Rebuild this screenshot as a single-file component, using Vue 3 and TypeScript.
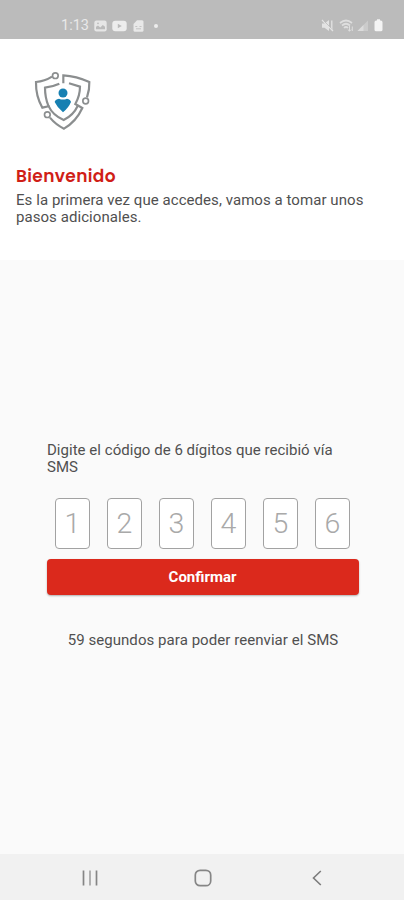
<script setup lang="ts">
import { ref } from 'vue'

const digits = ref<string[]>(['', '', '', '', '', ''])
const seconds = ref<number>(59)
</script>

<template>
  <div class="screen">
    <div class="status">
      <div class="status-left">
        <span class="time">1:13</span>
        <svg class="ic-image" width="13" height="12" viewBox="0 0 13 12">
          <rect x="0.3" y="0.5" width="12.4" height="11" rx="2.2" fill="#e6e6e6" />
          <path d="M2 9.3V6.8L4 5.5l2.3 2L8.8 5 11 6.8v2.5z" fill="#bbb" />
          <circle cx="4" cy="3.3" r="0.9" fill="#bbb" />
        </svg>
        <svg class="ic-video" width="15" height="12" viewBox="0 0 15 12">
          <rect x="0.3" y="0.8" width="14.4" height="10.4" rx="3" fill="#ededed" />
          <path d="M5.8 3.7v4.6L9.8 6z" fill="#bbb" />
        </svg>
        <svg class="ic-card" width="11" height="12" viewBox="0 0 11 12">
          <path d="M4 .3h5q1.500 0 1.500 1.500v8.400q0 1.500-1.500 1.500H2Q.5 11.700.5 10.200V4z" fill="#e8e8e8" />
          <path d="M2.300 6.500h2M6.500 6.500h2M3 8.800h5" stroke="#c4c4c4" stroke-width="1" />
        </svg>
        <i class="dot"></i>
      </div>
      <div class="status-right">
        <svg width="13" height="13" viewBox="0 0 13 13">
          <path d="M1 4.500h2.500L8 1v11L3.500 8.800H1z" fill="#e3e3e3" />
          <path d="M1 1l11 11M10.800 1.500v10" stroke="#e3e3e3" stroke-width="1.300" fill="none" />
          <path d="M2.500 1.500l8 8" stroke="#bbb" stroke-width="0.800" />
        </svg>
        <svg class="ic-wifi" width="15" height="13" viewBox="0 0 15 13">
          <path d="M1 4q6-5 12 0M3 6.500q4-3.500 8 0M5 9q2-2 4 0" stroke="#dedede" stroke-width="1.700" fill="none" />
          <path d="M10.500 7v5M8.800 10.500l1.700 1.700 1.700-1.700M13.300 12V7.500" stroke="#dedede" stroke-width="1" fill="none" />
        </svg>
        <svg class="ic-signal" width="12" height="13" viewBox="0 0 12 13">
          <path d="M.5 12L11 1.500V12z" fill="#cbcbcb" />
          <path d="M.5 12L6.500 6v6z" fill="#dcdcdc" />
        </svg>
        <svg class="ic-battery" width="9" height="13" viewBox="0 0 9 13">
          <path d="M3 .3h3v1.200h.7Q8.500 1.500 8.500 3.300v7.400q0 1.600-1.700 1.600H2.200Q.5 12.300.5 10.700V3.300Q.5 1.500 2.300 1.500H3z" fill="#f4f4f4" />
        </svg>
      </div>
    </div>

    <header class="intro">
      <svg class="logo" width="80" height="80" viewBox="0 0 240 240" fill="none">
        <g stroke="#8b8e8f" stroke-width="6.500" stroke-linejoin="miter">
          <path d="M81 50Q59 64 33 66Q32 108 52 143L74 138" />
          <path d="M103 71Q83 80 60 83Q60 112 70 137Q83 166 116 180Q145 166 158 138" />
          <path d="M115 70V46Q154 48 193 66Q194 88 186 112" />
          <path d="M132 70L165 80Q165 106 151 132L172 144Q154 184 117 206Q92 194 75 173" />
          <circle cx="91" cy="47" r="8.500" stroke-width="5" />
          <circle cx="182" cy="123" r="8.500" stroke-width="5" />
          <circle cx="67" cy="164" r="8.500" stroke-width="5" />
        </g>
        <circle cx="114" cy="99" r="13.500" fill="#1780b2" />
        <path d="M89 126Q90 118 102 116Q114 121 126 116Q137 118 138 126Q131 143 114 157Q97 143 89 126Z" fill="#1780b2" />
      </svg>
      <h1>Bienvenido</h1>
      <p>Es la primera vez que accedes, vamos a tomar unos<br />pasos adicionales.</p>
    </header>

    <main class="content">
      <p class="label">Digite el código de 6 dígitos que recibió vía<br />SMS</p>
      <div class="code">
        <input
          v-for="(_, i) in digits"
          :key="i"
          v-model="digits[i]"
          type="text"
          inputmode="numeric"
          maxlength="1"
          :placeholder="String(i + 1)"
        />
      </div>
      <button type="button">Confirmar</button>
      <p class="resend">{{ seconds }} segundos para poder reenviar el SMS</p>
    </main>

    <nav class="navbar">
      <svg width="16" height="16" viewBox="0 0 16 16" stroke="#858585" stroke-width="1.700">
        <path d="M1.500 0.500v15M14.500 0.500v15" />
        <path d="M8 0.500v15" stroke="#a5a5a5" />
      </svg>
      <svg class="home" width="18" height="18" viewBox="0 0 18 18" fill="none" stroke="#868686" stroke-width="1.700">
        <rect x="1.300" y="1.300" width="15.400" height="15.400" rx="4.800" />
      </svg>
      <svg width="10" height="16" viewBox="0 0 10 16" fill="none" stroke="#7c7c7c" stroke-width="1.600">
        <path d="M8.800 1L1.500 8l7.300 7" />
      </svg>
    </nav>
  </div>
</template>

<style>
body {
  margin: 0;
}
</style>

<style scoped>
.screen {
  width: 404px;
  height: 900px;
  display: flex;
  flex-direction: column;
  overflow: hidden;
  background: #fafafa;
  font-family: Roboto, "Liberation Sans", sans-serif;
  color: #505050;
}
svg {
  display: block;
  flex: none;
}
h1,
p {
  margin: 0;
}
.status {
  box-sizing: border-box;
  height: 39px;
  flex: none;
  display: flex;
  justify-content: space-between;
  padding: 12px 21px 0 61px;
  background: #bbb;
}
.status-left,
.status-right {
  display: flex;
  align-items: center;
  height: 27px;
}
.time {
  width: 33px;
  font-size: 14.5px;
  color: #e9e9e9;
}
.ic-video {
  margin-left: 5px;
}
.ic-card {
  margin-left: 6px;
}
.dot {
  width: 4px;
  height: 4px;
  margin-left: 10px;
  border-radius: 50%;
  background: #ededed;
}
.ic-wifi {
  margin-left: 5px;
}
.ic-signal {
  margin-left: 3px;
}
.ic-battery {
  margin-left: 5px;
}
.intro {
  box-sizing: border-box;
  height: 221px;
  flex: none;
  padding: 21px 16px 0;
  background: #fff;
}
.logo {
  margin-left: 9px;
}
h1 {
  margin-top: 24px;
  font: 600 17px/24px Poppins, Inter, sans-serif;
  letter-spacing: 0.35px;
  color: #d01e17;
}
.intro p,
.label,
.resend {
  font-size: 15px;
  line-height: 17px;
  letter-spacing: 0.03px;
  white-space: nowrap;
}
.intro p {
  margin-top: 4px;
  letter-spacing: 0.06px;
}
.content {
  flex: 1;
  display: flex;
  flex-direction: column;
  padding: 182px 45px 0 47px;
}
.code {
  display: flex;
  justify-content: space-between;
  margin-top: 22px;
  padding: 0 9px 0 8px;
}
.code input {
  box-sizing: border-box;
  width: 35px;
  height: 51px;
  padding: 0;
  border: 1px solid #a2a2a2;
  border-radius: 4px;
  background: #fff;
  font: 300 28.5px Roboto, sans-serif;
  text-align: center;
  color: #555;
  outline: none;
}
.code input::placeholder {
  color: #a9a9a9;
  opacity: 1;
}
button {
  height: 36px;
  flex: none;
  margin-top: 10px;
  padding: 0 1px 1px 0;
  border: 0;
  border-radius: 4px;
  background: #db291c;
  box-shadow: 0 1px 2px rgba(0, 0, 0, 0.3);
  color: #fff;
  font: 700 15px Roboto, sans-serif;
}
.resend {
  margin-top: 37px;
  text-align: center;
  letter-spacing: 0.06px;
}
.navbar {
  box-sizing: border-box;
  height: 46px;
  flex: none;
  display: flex;
  align-items: center;
  justify-content: space-between;
  padding: 2px 82px 0;
  background: #f1f1f1;
}
.home {
  margin-right: 4px;
}
</style>
